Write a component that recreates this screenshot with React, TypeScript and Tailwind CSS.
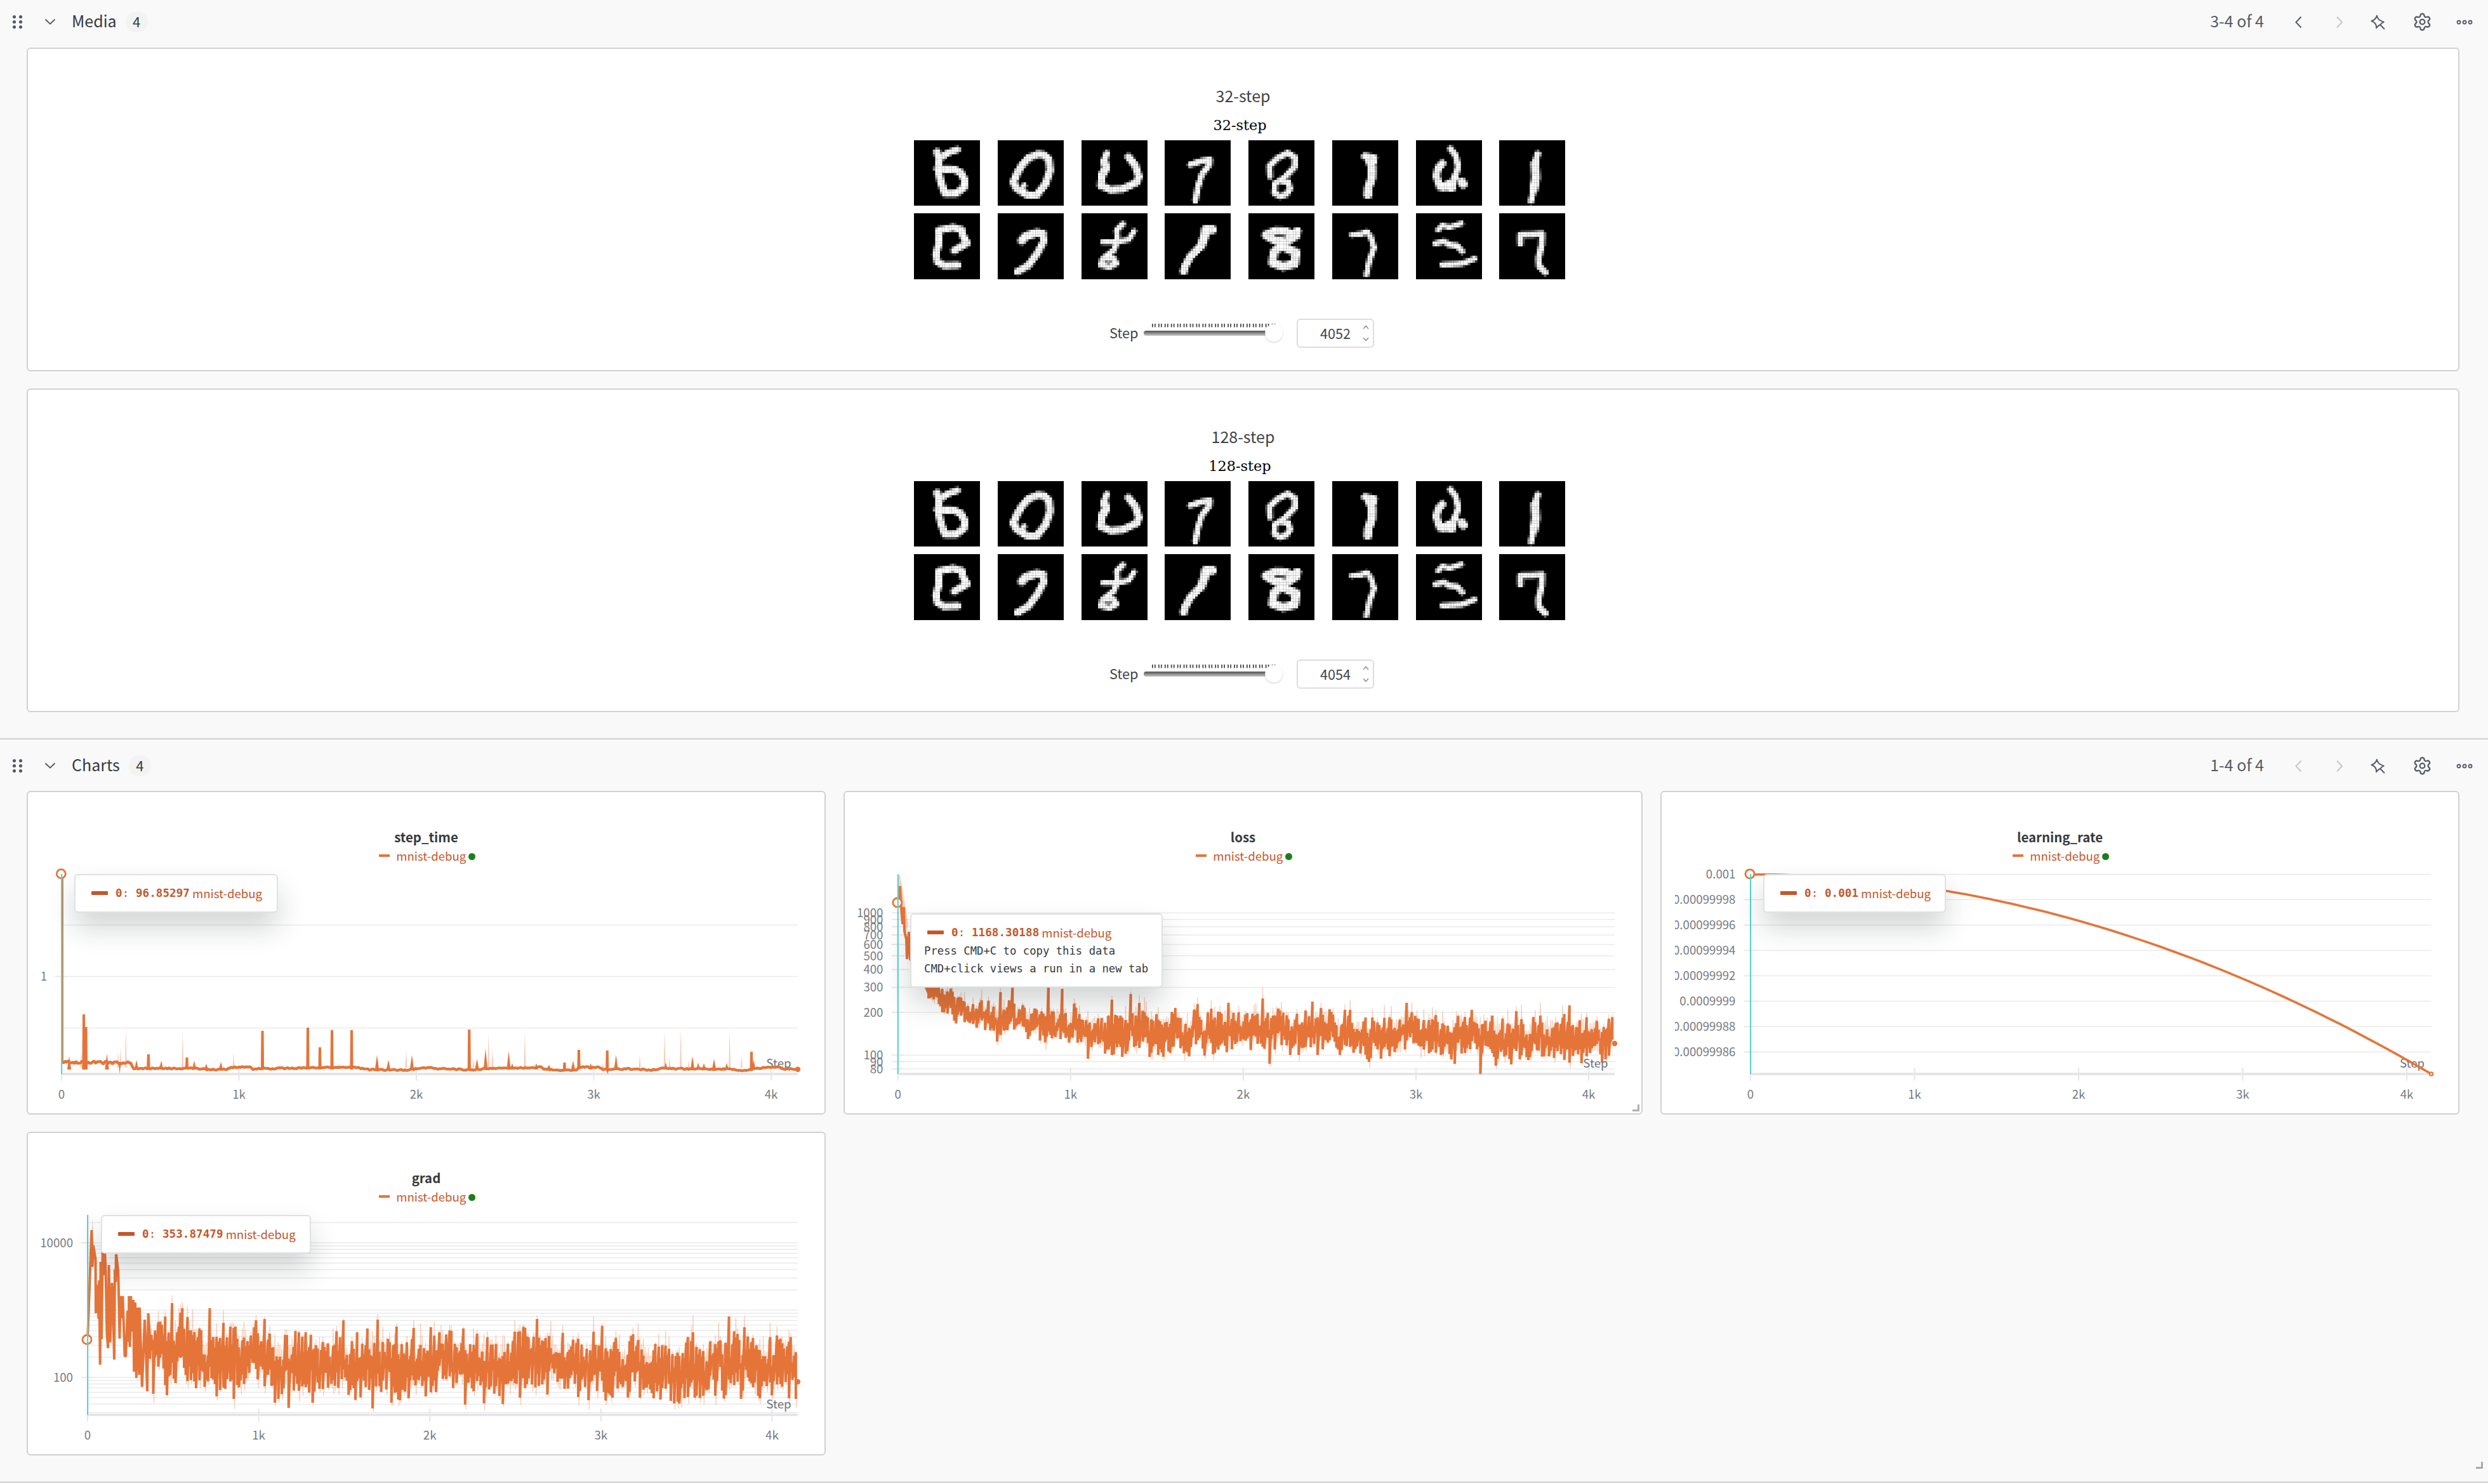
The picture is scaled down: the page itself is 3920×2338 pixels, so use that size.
import React from "react";
import { Settings } from "lucide-react";

type Pt = [number, number];

const ORANGE = "#e57439";
const SANS = "'Noto Sans CJK SC', 'Noto Sans', sans-serif";

/* ---------- helpers ---------- */

function makeRng(seed: number) {
  let s = seed >>> 0;
  return () => {
    s = (s + 0x6d2b79f5) >>> 0;
    let t = s;
    t = Math.imul(t ^ (t >>> 15), t | 1);
    t ^= t + Math.imul(t ^ (t >>> 7), t | 61);
    return ((t ^ (t >>> 14)) >>> 0) / 4294967296;
  };
}

function segDist(px: number, py: number, a: Pt, b: Pt) {
  const dx = b[0] - a[0];
  const dy = b[1] - a[1];
  const l = dx * dx + dy * dy;
  const t = l === 0 ? 0 : Math.max(0, Math.min(1, ((px - a[0]) * dx + (py - a[1]) * dy) / l));
  return Math.hypot(px - a[0] - t * dx, py - a[1] - t * dy);
}

/* ---------- sampled digits on a 28 x 28 grid ---------- */

type Stroke = { w: number; p: Pt[] };

const DIGITS: Stroke[][] = [
  [
    { w: 2.3, p: [[18.4, 4], [14.4, 5.4], [11.4, 7.5]] },
    { w: 2.6, p: [[9.8, 5], [10.8, 8], [10.2, 12.3], [11.4, 18], [13.2, 22.8], [17.8, 22.8], [21.2, 20.2], [21.5, 17], [19.8, 13.8], [17, 12.4], [10, 12.3]] },
  ],
  [
    { w: 2.6, p: [[17.1, 5.9], [13, 7.6], [10, 11], [8.2, 14.2], [6.6, 17.9], [8, 20.6], [12.8, 23.6], [16.4, 23.6], [20.3, 18.6], [22.2, 12.9], [21.7, 8.2], [19.5, 6.2], [17.1, 5.9]] },
    { w: 1.7, p: [[11.3, 19.3], [9.6, 21.3]] },
  ],
  [
    { w: 2.1, p: [[10.7, 5.6], [9.6, 9]] },
    { w: 3, p: [[9.6, 9], [10.4, 11.8], [8.6, 15]] },
    { w: 2.6, p: [[8.6, 15], [8.2, 19.4], [12.4, 21.2], [17.5, 20.8], [23.4, 18], [24.3, 15.6], [22.8, 10.8], [19.9, 7.1]] },
  ],
  [{ w: 2, p: [[10.9, 10.4], [16.2, 8.7], [19.2, 8.3], [19, 10.4], [15.7, 14.7], [14.1, 20], [13, 25.8]] }],
  [{ w: 2, p: [[9.1, 15.4], [8.9, 11], [12.4, 7.6], [16.7, 5.4], [19.8, 7.4], [19.6, 11.4], [15.2, 16.1], [11.2, 18.6], [11, 22.6], [13.4, 24], [16, 23.2], [17.6, 20.8], [16.8, 17.8], [14, 17.4]] }],
  [
    { w: 2.6, p: [[13.9, 6.8], [17.7, 7.6], [15.4, 8.4], [17.3, 9.5]] },
    { w: 3, p: [[15.6, 8.4], [16.9, 11.5], [16.8, 16.1], [15.3, 20.4], [15.1, 23.4]] },
  ],
  [
    { w: 2, p: [[14.6, 3.6], [16.8, 6.4], [17.9, 11.3], [16.6, 16]] },
    { w: 2.6, p: [[16.6, 15.5], [15, 20.2], [10.2, 20], [8.6, 15.2], [9.5, 11.7], [11.2, 9.9]] },
    { w: 3, p: [[11.5, 20], [14.6, 18.4], [15.2, 20.4]] },
    { w: 3.2, p: [[19.4, 17.9], [20, 18.8]] },
  ],
  [
    { w: 2.1, p: [[16.4, 5.8], [15.2, 9.5]] },
    { w: 3.2, p: [[15.2, 10], [15.6, 16.1], [14.7, 20.8]] },
    { w: 2, p: [[14.6, 21.5], [13.5, 26]] },
  ],
  [{ w: 2.5, p: [[17.1, 15.8], [22.6, 12.6], [20.8, 9.6], [20.2, 7], [16.6, 6], [10.6, 7.2], [10.6, 12.8], [9.3, 17.3], [10, 20.6], [12.8, 22.2], [18.6, 22]] }],
  [
    { w: 3, p: [[10.2, 11.6], [12, 9.6], [16.6, 8.3], [19, 8.7]] },
    { w: 2.5, p: [[19, 8.7], [19.5, 11.9], [16.6, 17.3], [12.8, 22.3], [8.4, 24.7]] },
  ],
  [
    { w: 1.9, p: [[17.5, 4.6], [14.9, 7.2], [15.3, 11], [13.9, 15.5], [8.8, 19.5], [8.3, 22], [11.9, 22.8], [14.8, 21.2], [13.6, 19.2], [11, 19.4]] },
    { w: 1.7, p: [[9, 12.2], [14.8, 12.2], [20, 11.2], [22.3, 7.6]] },
  ],
  [
    { w: 3.2, p: [[20.2, 6.9], [17.4, 6.9], [16.8, 10], [15.5, 13.7]] },
    { w: 2.7, p: [[15.5, 13.7], [10.9, 18.4], [8.6, 22.5], [8.1, 24.6]] },
  ],
  [
    { w: 3, p: [[7.4, 9.2], [11.4, 7.5], [16, 7.6], [18, 9.4], [20.7, 7.6]] },
    { w: 3, p: [[20.3, 9.4], [16, 12.2], [11.4, 11.6], [8, 9.6]] },
    { w: 3.1, p: [[14.4, 13], [10.8, 16.6], [10.2, 21], [14.7, 22.6], [19.6, 21.4], [20.2, 16.6], [15.7, 14.6], [13.3, 13.4]] },
  ],
  [{ w: 1.8, p: [[8.4, 9.1], [12, 8.8], [14.8, 7.9], [16.4, 10.2], [17.7, 14.6], [15.8, 20], [14.5, 26]] }],
  [
    { w: 1.7, p: [[9.4, 7], [11.2, 5.2], [14.3, 5.9], [19.2, 4.3]] },
    { w: 1.9, p: [[8.3, 12.8], [11.9, 11.9], [13.9, 13.3], [17.4, 13.7], [19.6, 16.2]] },
    { w: 1.8, p: [[11.2, 21.8], [19.4, 21.4], [24.8, 19.3]] },
  ],
  [{ w: 2.1, p: [[9, 12.9], [9, 9.1], [14.1, 9], [18.2, 8.7], [18, 13.7], [16.7, 19.1], [17, 22.5], [19.6, 25.1]] }],
];

function Digit({ strokes, w, seed }: { strokes: Stroke[]; w: number; seed: number }) {
  const rnd = makeRng(seed);
  const cells: React.ReactNode[] = [];
  for (let y = 0; y < 28; y++) {
    for (let x = 0; x < 28; x++) {
      let v = 0;
      for (const s of strokes) {
        for (let i = 0; i < s.p.length - 1; i++) {
          const d = segDist(x + 0.5, y + 0.5, s.p[i], s.p[i + 1]);
          v = Math.max(v, Math.min(1, (s.w / 2 + 0.68 - d) * 1.2));
        }
      }
      if (v > 0.12) {
        const g = Math.round(Math.min(1, v * (0.94 + rnd() * 0.14)) * 254);
        cells.push(<rect key={`${x}-${y}`} x={x} y={y} width={1.03} height={1.03} fill={`rgb(${g},${g},${g})`} />);
      }
    }
  }
  return (
    <svg className="block h-full bg-black" style={{ width: w }} viewBox="0 0 28 28" preserveAspectRatio="none">
      {cells}
    </svg>
  );
}

/* ---------- header ---------- */

function SectionHeader({ title, range, prevActive }: { title: string; range: string; prevActive: boolean }) {
  return (
    <div className="flex h-[69px] items-center pl-[19px] pr-[24px]">
      <svg className="h-6 w-[18px]" viewBox="0 0 18 24">
        {[3.5, 13.5].map((x) => [3.5, 11.5, 19.5].map((y) => <circle key={`${x}${y}`} cx={x} cy={y} r="2.6" fill="#565c66" />))}
      </svg>
      <svg className="ml-[33px] h-3 w-[18px]" viewBox="0 0 18 12" fill="none" stroke="#565c66" strokeWidth="2">
        <path d="M1.5 1.5 L9 8.7 L16.5 1.5" />
      </svg>
      <div className="mb-[6px] ml-[25px] text-[25px] leading-8 text-[#363a3d]">{title}</div>
      <div className="mb-[1px] ml-[14px] flex h-[33px] w-[35px] items-center justify-center rounded-full bg-[#f3f3f3] text-[#363a3d]">
        <span className="mb-[2px] text-[22px] leading-none">4</span>
      </div>
      <div className="ml-auto mb-[5px] text-[25px] leading-8 text-[#565c66]">{range}</div>
      <svg className="ml-[47px] h-5 w-[14px]" viewBox="0 0 14 20" fill="none" stroke={prevActive ? "#565c66" : "#c4c7cb"} strokeWidth="2">
        <path d="M11.5 1.5 L3.5 10 L11.5 18.5" />
      </svg>
      <svg className="ml-[52px] h-5 w-[14px]" viewBox="0 0 14 20" fill="none" stroke="#c4c7cb" strokeWidth="2">
        <path d="M2 1.5 L10 10 L2 18.5" />
      </svg>
      <svg className="ml-[41px] h-6 w-6" viewBox="0 0 24 24" fill="none" stroke="#565c66" strokeWidth="2" strokeLinejoin="round">
        <path d="M10 1.6 C10.6 6 12.4 8.6 20.8 11.6 C18.6 12.6 16.6 14 15.2 16 C13 17 10.8 18.6 9 21.2 C9.6 17 8 12.6 1.4 10 C5.4 9 8.6 6 10 1.6 Z" />
        <path d="M15.2 16 L22 23" />
      </svg>
      <Settings className="ml-[42px]" size={31} strokeWidth={1.8} color="#565c66" />
      <svg className="ml-[38px] h-2 w-[26px]" viewBox="0 0 26 8" fill="none" stroke="#565c66" strokeWidth="1.9">
        <circle cx="4" cy="4" r="2.5" />
        <circle cx="13" cy="4" r="2.5" />
        <circle cx="22" cy="4" r="2.5" />
      </svg>
    </div>
  );
}

/* ---------- media ---------- */

function StepSlider({ value }: { value: string }) {
  const ticks: number[] = [];
  for (let i = 0; i < 20; i++) ticks.push(14 + i * 9.93, 18 + i * 9.93);
  return (
    <div className="flex h-[46px] items-center pl-[1704px]">
      <div className="mb-[3px] w-[53px] text-[21.6px] leading-7 text-[#3f4347]">Step</div>
      <svg className="-mt-[5px] h-9 w-[224px]" viewBox="0 0 224 36">
        <defs>
          <linearGradient id="track" x1="0" y1="0" x2="0" y2="1">
            <stop offset="0" stopColor="#4f4f4f" />
            <stop offset="1" stopColor="#c9c9c9" />
          </linearGradient>
          <filter id="knob" x="-20%" y="-20%" width="140%" height="140%">
            <feDropShadow dx="0" dy="1" stdDeviation="1" floodOpacity="0.25" />
          </filter>
        </defs>
        {ticks.map((x) => (
          <rect key={x} x={x} y="5" width="1.8" height="5.5" fill="#4a4a4a" />
        ))}
        <rect x="1" y="16" width="218" height="8" rx="4" fill="url(#track)" />
        <circle cx="206" cy="19.5" r="13.8" fill="#fff" filter="url(#knob)" />
      </svg>
      <div className="ml-[18px] flex h-[46px] w-[122px] items-center rounded-md border-2 border-[#dcdddf] bg-white">
        <span className="mb-[1px] ml-[35px] flex-1 text-[21.6px] leading-7 text-[#3f4347]">{value}</span>
        <svg className="mr-[5px] h-7 w-3" viewBox="0 0 12 28" fill="none" stroke="#8a9099" strokeWidth="1.5">
          <path d="M2 7 L6 2.5 L10 7 M2 21 L6 25.5 L10 21" />
        </svg>
      </div>
    </div>
  );
}

function MediaPanel({ title, step }: { title: string; step: string }) {
  const seed = title.length * 97;
  return (
    <div className="flex h-[510px] flex-col rounded-md border-2 border-[#d0d1d2] bg-white">
      <div className="mt-[55px] text-center text-[25px] leading-9 text-[#3f4347]">{title}</div>
      <div className="mt-[15px] pr-[10px] text-center text-[22.4px] leading-7 text-black [font-family:'DejaVu_Serif',serif]">{title}</div>
      <div className="ml-[1396px] mt-[10px] grid w-[1026px] grid-cols-8 gap-x-[28px] gap-y-[12px]">
        {DIGITS.map((d, i) => (
          <div key={i} className={i < 8 ? "h-[103px]" : "h-[104px]"}>
            <Digit strokes={d} w={104} seed={seed + i} />
          </div>
        ))}
      </div>
      <div className="mt-[62px]">
        <StepSlider value={step} />
      </div>
    </div>
  );
}

/* ---------- charts ---------- */

type Tick = { at: number; label: string };

function Tooltip({ x, y, width, value, hints }: { x: number; y: number; width: number; value: string; hints?: string[] }) {
  return (
    <div
      className="absolute z-10 rounded-md border-2 border-[#dfe1e3] bg-white pb-[15px] pt-[14px] shadow-[0_24px_44px_rgba(20,30,30,0.19)]"
      style={{ left: x, top: y, width }}
    >
      <div className="flex h-7 items-center whitespace-nowrap pl-[25px] text-[#c4572a]">
        <span className="h-[6px] w-[26px] rounded-[1px] bg-[#c4572a]" />
        <span className="ml-[12px] whitespace-pre text-[17.5px] font-bold leading-7 tracking-[0.1px] [font-family:'DejaVu_Sans_Mono',monospace]">
          0<span className="font-normal">:</span> {value}
        </span>
        <span className="mb-[1px] ml-[4px] text-[18.6px] leading-7">mnist-debug</span>
      </div>
      {hints?.map((h) => (
        <div key={h} className="relative top-[1px] whitespace-pre pl-[20px] text-[17.25px] leading-7 text-[#363a3d] [font-family:'DejaVu_Sans_Mono',monospace]">
          {h}
        </div>
      ))}
    </div>
  );
}

type ChartProps = {
  title: string;
  left: number;
  top: number;
  x0: number;
  xEnd: number;
  xTicks: Tick[];
  yTicks: Tick[];
  grid: number[];
  labelRight: number;
  marker: Pt;
  end: Pt;
  hollowEnd?: boolean;
  stepOnTop?: boolean;
  clipLeft?: number;
  handle?: boolean;
  tooltip: { x: number; y: number; width: number; value: string; hints?: string[] };
  children: React.ReactNode;
};

/* Plot coordinates are those of the workspace canvas; the viewBox picks the panel's window. */
function ChartPanel(p: ChartProps) {
  const base = p.top + 446;
  const vy = p.top + 116;
  const stepLabel = (
    <text x={p.xEnd - 10.5} y={base - 10} textAnchor="end" fontSize="18.6" fill="#6f727a">
      Step
    </text>
  );
  return (
    <div className="relative flex h-[510px] flex-col rounded-md border-2 border-[#d0d1d2] bg-white">
      <div className="mt-[56px] text-center text-[20.4px] font-semibold leading-7 text-[#363a3d]">{p.title}</div>
      <div className="mt-[4px] flex h-6 items-center justify-center pl-[3px] text-[#c75a2e]">
        <span className="h-[4px] w-[17px] bg-[#e57439]" />
        <span className="mb-[1px] ml-[10px] text-[18.6px] leading-6">mnist-debug</span>
        <span className="ml-[4px] mt-[3px] h-[10.5px] w-[10.5px] rounded-full bg-[#1c7e1b]" />
      </div>
      <svg className="mt-[2px] block h-[392px] w-full" viewBox={`${p.left + 2} ${vy} 1255 392`} fontFamily={SANS}>
        <g fill="#e8e8ea">
          {p.grid.map((y) => (
            <rect key={y} x={p.x0} y={y - 0.6} width={p.xEnd - p.x0} height="1.3" />
          ))}
          {p.yTicks.map((t) => (
            <rect key={t.label} x={p.x0 - 10} y={t.at - 1} width="20" height="2" />
          ))}
          <rect x={p.x0} y={base - 2} width={p.xEnd - p.x0} height="4" fill="#e6e6e8" />
          {p.xTicks.map((t) => (
            <rect key={t.label} x={t.at - 1} y={base - 10} width="2" height="20.5" fill="#e6e6e8" />
          ))}
        </g>
        <clipPath id={`clip-${p.title}`}>
          <rect x={p.clipLeft ?? p.left} y={vy} width="1300" height="400" />
        </clipPath>
        <g fontSize="18.7" fill="#787b83">
          <g textAnchor="end" clipPath={`url(#clip-${p.title})`}>
            {p.yTicks.map((t) => (
              <text key={t.label} x={p.labelRight} y={t.at + 7}>
                {t.label}
              </text>
            ))}
          </g>
          <g textAnchor="middle">
            {p.xTicks.map((t) => (
              <text key={t.label} x={t.at} y={p.top + 485}>
                {t.label}
              </text>
            ))}
          </g>
        </g>
        {!p.stepOnTop && stepLabel}
        {p.children}
        {p.stepOnTop && stepLabel}
        {p.hollowEnd ? (
          <circle cx={p.end[0]} cy={p.end[1]} r="2.8" fill="#fbd9c8" stroke={ORANGE} strokeWidth="2" />
        ) : (
          <circle cx={p.end[0]} cy={p.end[1]} r="4.2" fill={ORANGE} />
        )}
        <circle cx={p.marker[0]} cy={p.marker[1]} r="7" fill="#fff" stroke={ORANGE} strokeWidth="2.8" />
        <rect x={p.x0 - 1} y={p.top + 131} width="2.2" height={315} fill="#5bd3d4" />
      </svg>
      <Tooltip {...p.tooltip} x={p.tooltip.x - p.left - 2} y={p.tooltip.y - p.top - 2} />
      {p.handle && <div className="absolute bottom-[3px] right-[3px] h-[11px] w-[11px] border-b-[3px] border-r-[3px] border-[#b0b0b0]" />}
    </div>
  );
}

function interp(env: [number, number, number][], x: number): Pt {
  for (let i = 1; i < env.length; i++) {
    if (x <= env[i][0]) {
      const a = env[i - 1];
      const b = env[i];
      const t = (x - a[0]) / (b[0] - a[0]);
      return [a[1] + t * (b[1] - a[1]), a[2] + t * (b[2] - a[2])];
    }
  }
  const e = env[env.length - 1];
  return [e[1], e[2]];
}

/* Builds the bucketed min/max trace and its faint raw range. */
function noisy(seed: number, env: [number, number, number][], ups: Pt[], downs: Pt[], head: Pt[]) {
  const rnd = makeRng(seed);
  const start = env[0][0];
  const end = env[env.length - 1][0];
  const step = 2.7;
  let solid = "M" + head.map((q) => q.join(",")).join("L");
  let faint = "";
  let drift = 0;
  for (let x = start; x < end; x += step) {
    const [t, b] = interp(env, x);
    const h = b - t;
    drift = drift * 0.45 + (rnd() - 0.5) * h * 0.3;
    const mid = (t + b) / 2 + drift;
    let hi = mid - h * (0.06 + 0.48 * rnd());
    let lo = mid + h * (0.06 + 0.46 * rnd());
    const u = ups.find((q) => Math.abs(q[0] - x) <= step / 2);
    const d = downs.find((q) => Math.abs(q[0] - x) <= step / 2);
    if (u) hi = u[1];
    if (d) lo = d[1];
    solid += `L${x.toFixed(1)},${hi.toFixed(1)}L${x.toFixed(1)},${lo.toFixed(1)}`;
    const fh = Math.min(hi, mid - h * 0.3) - rnd() * rnd() * h * 0.45;
    const fl = Math.max(lo, mid + h * 0.25) + rnd() * rnd() * h * 0.25;
    faint += `${faint ? "L" : "M"}${x.toFixed(1)},${fh.toFixed(1)}L${(x + 1.2).toFixed(1)},${fl.toFixed(1)}`;
  }
  return { solid, faint };
}

function NoisySeries({ solid, faint }: { solid: string; faint: string }) {
  return (
    <g fill="none" strokeLinejoin="bevel">
      <path d={faint} stroke={ORANGE} strokeOpacity="0.33" strokeWidth="1.4" />
      <path d={solid} stroke={ORANGE} strokeWidth="4" />
    </g>
  );
}

const lossTrace = noisy(
  11,
  [
    [1463, 1535, 1580], [1480, 1550, 1592], [1503, 1562, 1604], [1524, 1578, 1615], [1549, 1580, 1622], [1575, 1578, 1636],
    [1606, 1585, 1628], [1647, 1590, 1644], [1690, 1588, 1645], [1730, 1600, 1650], [1770, 1592, 1658], [1810, 1595, 1656],
    [1870, 1598, 1656], [1960, 1600, 1655], [2080, 1602, 1655], [2200, 1604, 1661], [2330, 1607, 1665], [2450, 1607, 1666], [2542, 1605, 1667],
  ],
  [
    [1576, 1563], [1594, 1554], [1651, 1550], [1674, 1558], [1692, 1581], [1751, 1575], [1781, 1566], [1794, 1580], [1853, 1588], [1888, 1582], [1919, 1594], [1935, 1580],
    [1990, 1573], [2013, 1589], [2043, 1597], [2058, 1592], [2067, 1578], [2080, 1588], [2095, 1590], [2119, 1591], [2128, 1591], [2152, 1603], [2217, 1580], [2320, 1591],
    [2350, 1600], [2389, 1593], [2426, 1600], [2472, 1584], [2536, 1605],
  ],
  [
    [1572, 1641], [1713, 1668], [1768, 1665], [1824, 1662], [1834, 1665], [1910, 1661], [2001, 1676], [2032, 1662], [2045, 1662], [2077, 1662], [2158, 1673], [2190, 1664],
    [2291, 1676], [2332, 1692], [2356, 1679], [2380, 1677], [2408, 1670], [2464, 1670], [2493, 1675],
  ],
  [[1415, 1422], [1418, 1396], [1420, 1432], [1422, 1456], [1424, 1429], [1425, 1467], [1428, 1480], [1429, 1511], [1432, 1468], [1434, 1511], [1448, 1530], [1463, 1565]],
);

const gradTrace = noisy(
  29,
  [
    [236, 2080, 2178], [262, 2090, 2175], [290, 2078, 2170], [330, 2098, 2182], [370, 2100, 2190], [408, 2092, 2172], [435, 2110, 2195], [480, 2104, 2190], [560, 2116, 2192],
    [620, 2112, 2196], [680, 2108, 2188], [720, 2104, 2186], [800, 2112, 2198], [845, 2104, 2180], [900, 2114, 2196], [1000, 2112, 2192], [1060, 2120, 2204], [1150, 2108, 2190], [1255, 2116, 2198],
  ],
  [
    [249, 2083], [259, 2074], [272, 2053], [284, 2068], [287, 2061], [295, 2075], [318, 2096], [330, 2061], [351, 2084], [363, 2090], [404, 2080], [416, 2078], [448, 2103], [470, 2099],
    [483, 2099], [491, 2103], [541, 2080], [564, 2099], [578, 2093], [594, 2079], [626, 2090], [653, 2092], [680, 2091], [693, 2099], [712, 2097], [731, 2093], [751, 2101], [811, 2098],
    [827, 2092], [845, 2078], [860, 2108], [934, 2098], [949, 2089], [998, 2102], [1093, 2099], [1148, 2074], [1172, 2091], [1223, 2104],
  ],
  [
    [242, 2196], [264, 2198], [277, 2179], [322, 2185], [342, 2200], [369, 2204], [434, 2210], [439, 2204], [456, 2218], [493, 2210], [586, 2219], [617, 2210], [671, 2200], [687, 2193],
    [733, 2213], [763, 2211], [793, 2212], [818, 2202], [862, 2197], [911, 2201], [927, 2206], [966, 2202], [1009, 2202], [1031, 2203], [1058, 2207], [1085, 2201], [1128, 2199], [1197, 2203], [1243, 2203],
  ],
  [
    [138, 2111], [144.3, 1938], [145.6, 1996], [147, 1962], [150.5, 1984], [151, 2069], [153.7, 2024], [155.4, 2078], [156.3, 2017], [157.7, 2150], [158.6, 1988], [160, 2110], [161.7, 1973],
    [163.5, 2009], [165.3, 1973], [166.6, 2005], [168.4, 2100], [170.2, 2124], [171.5, 1993], [173.7, 2115], [176.4, 2021], [177.8, 2053], [180, 2142], [181, 2000], [182.2, 2020], [183, 1976],
    [186.2, 2002], [188.5, 2109], [189.8, 2042], [192, 2077], [193.4, 2042], [196.5, 2136], [198.3, 2137], [201, 2065], [202.8, 2114], [203.2, 2042], [204.6, 2122], [206.3, 2042], [208, 2098],
    [210, 2048], [211.2, 2161], [213, 2052], [214.8, 2171], [216, 2060], [219.3, 2166], [220, 2060], [223.8, 2185], [228, 2079], [230, 2130], [232, 2192], [233.6, 2069],
  ],
);

const stepTime = (() => {
  const rnd = makeRng(5);
  const levels: Pt[] = [
    [98, 1673], [130, 1674], [207, 1674], [209, 1683.5], [302, 1683], [330, 1685], [356, 1685], [363, 1682], [394, 1681], [398, 1684], [455, 1683], [500, 1682], [558, 1681.5], [580, 1685],
    [640, 1686], [670, 1682], [700, 1684], [745, 1685.5], [765, 1683.5], [825, 1682.5], [853, 1681.5], [856, 1684], [880, 1686.5], [908, 1685.5], [912, 1681.5], [944, 1681.5], [950, 1685],
    [970, 1684], [1000, 1684], [1025, 1686], [1045, 1683], [1100, 1684.5], [1145, 1684], [1170, 1687], [1187, 1684], [1205, 1681.5], [1228, 1681], [1232, 1684], [1257, 1684],
  ];
  let d = "";
  for (let x = 98; x <= 1257; x += 2.4) {
    let i = 1;
    while (i < levels.length - 1 && levels[i][0] < x) i++;
    const a = levels[i - 1];
    const b = levels[i];
    const y = a[1] + ((x - a[0]) / (b[0] - a[0])) * (b[1] - a[1]);
    const amp = x < 208 ? 5 : 2.2;
    d += `${d ? "L" : "M"}${x.toFixed(1)},${(y + (rnd() - 0.5) * amp).toFixed(1)}`;
  }
  return d;
})();

const bars: Pt[] = [
  [132, 1598], [135.5, 1618], [234, 1661], [294.5, 1666], [413.5, 1624], [485, 1619], [504, 1650], [523, 1623], [554, 1623], [739.3, 1622], [889.4, 1674], [912, 1654], [956.7, 1655], [1184, 1657],
];
const peaks: Pt[] = [
  [109, 1664], [168.5, 1660], [215, 1670], [254, 1671], [306, 1671], [325, 1676], [348, 1673], [594, 1662], [612, 1670], [649, 1662], [751.5, 1668], [765, 1652], [801.5, 1656], [807, 1675],
  [845, 1675], [865, 1677], [903, 1671], [930.6, 1675], [970.6, 1662], [1049, 1674], [1091, 1664], [1100, 1674], [1109, 1675], [1125, 1668], [1145, 1675], [1187.5, 1670],
];
const faintPeaks: Pt[] = [
  [128, 1656], [186, 1656], [190, 1649], [198.3, 1620], [232, 1655], [287.8, 1626], [368, 1658], [534, 1674], [640, 1654], [746, 1668], [769.6, 1628], [776, 1653], [827, 1624], [950, 1674],
  [1008, 1661], [1047, 1624], [1055, 1665], [1072.5, 1621], [1085, 1671], [1149.6, 1624], [1168.5, 1664],
];

function StepTimeSeries() {
  return (
    <g>
      {faintPeaks.map(([x, y]) => (
        <path key={x} d={`M${x - 1.4},1682 L${x},${y} L${x + 1.4},1682 Z`} fill={ORANGE} fillOpacity="0.38" />
      ))}
      {peaks.map(([x, y]) => (
        <path key={x} d={`M${x - 3.2},1685 L${x},${y} L${x + 3.2},1685 Z`} fill={ORANGE} />
      ))}
      {bars.map(([x, y]) => (
        <path key={x} d={`M${x - 2.6},1685 L${x - 2},${y} H${x + 2} L${x + 2.6},1685 Z`} fill={ORANGE} />
      ))}
      <path d="M186.5,1673 L188.7,1692 L190.5,1673 Z" fill={ORANGE} />
      <path d="M954,1684 L957.5,1692 L960,1684 Z" fill={ORANGE} />
      <path d="M98.4,1377 V1674" stroke={ORANGE} strokeWidth="3" />
      <path d={stepTime} fill="none" stroke={ORANGE} strokeWidth="4.4" strokeLinejoin="bevel" />
    </g>
  );
}

function learningCurve() {
  let d = "";
  for (let i = 0; i <= 60; i++) {
    const t = i / 60;
    d += `${i ? "L" : "M"}${(2758 + 1072.6 * t).toFixed(1)},${(1377.6 + 314.4 * t * t).toFixed(1)}`;
  }
  return d;
}

function xTicks(x0: number, k: number): Tick[] {
  return ["0", "1k", "2k", "3k", "4k"].map((label, i) => ({ label, at: x0 + i * k }));
}

const logGrid = (y100: number, decade: number, values: number[]) => values.map((v) => y100 - Math.log10(v / 100) * decade);

const lossValues = [1000, 900, 800, 700, 600, 500, 400, 300, 200, 100, 90, 80];
const lossY = logGrid(1662.3, 224, lossValues);
const gradY = logGrid(2170, 106, [
  20000, 10000, 9000, 8000, 7000, 6000, 5000, 4000, 3000, 2000, 1000, 900, 800, 700, 600, 500, 400, 300, 200, 100, 90, 80, 70, 60, 50, 40, 30,
]);
const rateLabels = ["0.001", "0.00099998", "0.00099996", "0.00099994", "0.00099992", "0.0009999", "0.00099988", "0.00099986"];
const rateTicks = rateLabels.map((label, i) => ({ label, at: 1377.3 + i * 40 }));

export default function App() {
  return (
    <div className="relative h-[2338px] w-[3920px] overflow-hidden bg-[#f9f9f9] [font-family:'Noto_Sans_CJK_SC','Noto_Sans',sans-serif]">
      <section className="h-[1165px] border-b-2 border-[#cfd0d1]">
        <SectionHeader title="Media" range="3-4 of 4" prevActive />
        <div className="mt-[6px] flex flex-col gap-[27px] pl-[42px] pr-[45px]">
          <MediaPanel title="32-step" step="4052" />
          <MediaPanel title="128-step" step="4054" />
        </div>
      </section>
      <section className="h-[1171px] border-b-2 border-[#cfd0d1] pt-[7px]">
        <SectionHeader title="Charts" range="1-4 of 4" prevActive={false} />
        <div className="mt-[5px] grid grid-cols-3 gap-x-[28px] gap-y-[27px] pl-[42px] pr-[45px]">
          <ChartPanel
            title="step_time"
            left={42}
            top={1246}
            x0={97}
            xEnd={1257}
            xTicks={xTicks(97, 279.5)}
            yTicks={[{ label: "1", at: 1538.4 }]}
            grid={[1457.2, 1538.4, 1619.6]}
            labelRight={74}
            marker={[96.3, 1376.6]}
            end={[1257, 1684.8]}
            tooltip={{ x: 117, y: 1377, width: 321, value: "96.85297" }}
          >
            <StepTimeSeries />
          </ChartPanel>
          <ChartPanel
            title="loss"
            left={1329}
            top={1246}
            x0={1414.7}
            xEnd={2544}
            xTicks={xTicks(1414.7, 272.1)}
            yTicks={lossValues.map((v, i) => ({ label: String(v), at: lossY[i] }))}
            grid={lossY}
            labelRight={1391.5}
            marker={[1413.8, 1422]}
            end={[2544, 1644]}
            stepOnTop
            handle
            tooltip={{ x: 1434, y: 1439, width: 398, value: "1168.30188", hints: ["Press CMD+C to copy this data", "CMD+click views a run in a new tab"] }}
          >
            <path d="M1415,1380 L1418,1378 L1424,1412 L1431,1455 L1428,1470 L1416,1420 Z" fill={ORANGE} fillOpacity="0.33" />
            <NoisySeries {...lossTrace} />
          </ChartPanel>
          <ChartPanel
            title="learning_rate"
            left={2616}
            top={1246}
            x0={2758}
            xEnd={3830.6}
            xTicks={xTicks(2758, 258.5)}
            yTicks={rateTicks}
            grid={rateTicks.map((t) => t.at)}
            labelRight={2734.5}
            clipLeft={2639}
            marker={[2757, 1376.8]}
            end={[3830.6, 1692]}
            hollowEnd
            tooltip={{ x: 2778, y: 1377, width: 288, value: "0.001" }}
          >
            <path d={learningCurve()} fill="none" stroke={ORANGE} strokeWidth="3.6" />
          </ChartPanel>
          <ChartPanel
            title="grad"
            left={42}
            top={1783}
            x0={138}
            xEnd={1257}
            xTicks={xTicks(138, 269.6)}
            yTicks={[
              { label: "10000", at: 1958 },
              { label: "100", at: 2170 },
            ]}
            grid={gradY}
            labelRight={115}
            marker={[137, 2110.5]}
            end={[1257, 2177]}
            stepOnTop
            tooltip={{ x: 159, y: 1914, width: 331, value: "353.87479" }}
          >
            <path d="M142,1990 L145.5,1918 L148,1960 L150,1985 Z" fill={ORANGE} fillOpacity="0.33" />
            <NoisySeries {...gradTrace} />
          </ChartPanel>
        </div>
      </section>
      <div className="absolute bottom-[24px] right-[8px] h-[11px] w-[11px] border-b-[3px] border-r-[3px] border-[#a9a9a9]" />
    </div>
  );
}
